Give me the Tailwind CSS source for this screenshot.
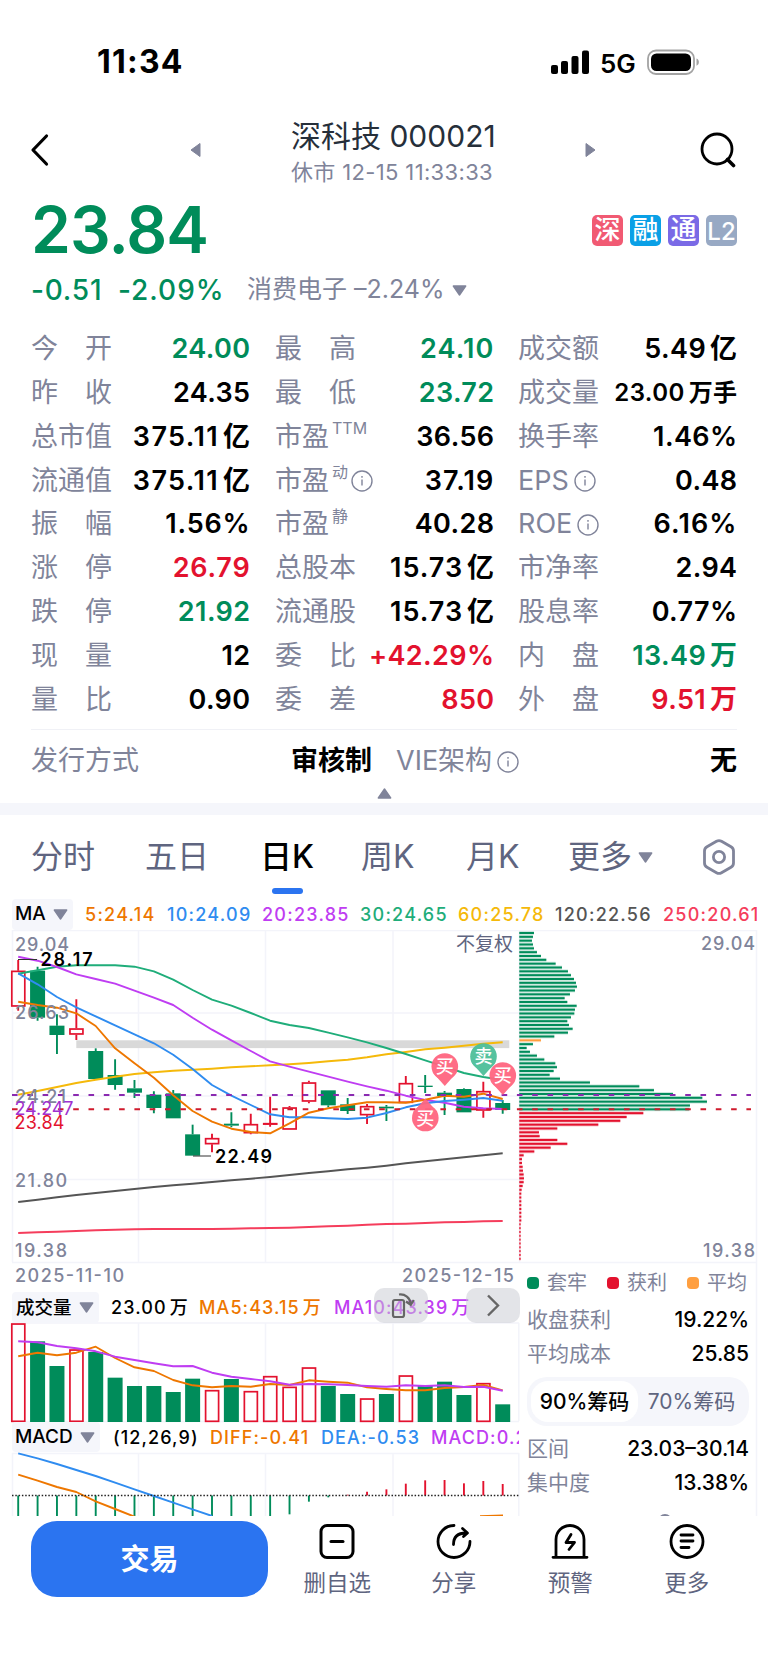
<!DOCTYPE html>
<html lang="zh-CN">
<head>
    <meta charset="UTF-8">
    <meta name="viewport" content="width=device-width, initial-scale=1.0">
    <title>深科技 000021</title>
    <script src="https://cdn.jsdelivr.net/npm/@tailwindcss/browser@4"></script>
</head>
<body class="bg-white font-['Inter','Noto_Sans_CJK_SC',sans-serif] text-black">

<!-- Shared icons -->
<svg class="hidden">
    <symbol id="info" viewBox="0 0 22 22">
        <circle cx="11" cy="11" r="10" fill="none" stroke="currentColor" stroke-width="1.4"/>
        <path d="M11 9.4V15.6M11 6v1.8" stroke="currentColor" stroke-width="1.4"/>
    </symbol>
    <symbol id="down" viewBox="0 0 15 11">
        <path d="M1.3 1h12.4L7.5 10z" fill="currentColor" stroke="currentColor" stroke-width="1.4" stroke-linejoin="round"/>
    </symbol>
</svg>

<div class="w-[768px] h-[1670px] overflow-hidden flex flex-col whitespace-nowrap">

    <!-- Status bar -->
    <div class="h-[118px] shrink-0 flex items-start justify-between pl-[97px] pr-[68px] pt-[42px]">
        <span class="text-[32px] leading-[40px] font-bold tracking-[1.2px]">11:34</span>
        <div class="flex items-center h-[40px]">
            <svg class="w-[38px] h-[26px]" viewBox="0 0 38 26">
                <rect x="0" y="16" width="7" height="9" rx="2"/>
                <rect x="10" y="12" width="7" height="13" rx="2"/>
                <rect x="20.5" y="7" width="7" height="18" rx="2"/>
                <rect x="31" y="1.500" width="7" height="23.500" rx="2"/>
            </svg>
            <span class="text-[26px] font-semibold ml-[11px] w-[47px] mt-[2px]">5G</span>
            <svg class="w-[53px] h-[26px]" viewBox="0 0 53 26">
                <rect x="1" y="1.500" width="46" height="23.500" rx="8" fill="none" stroke="#a3a3a3" stroke-width="1.800"/>
                <rect x="4" y="4.500" width="40" height="17.500" rx="5.500"/>
                <path d="M49.500 9.500c3.200 1.200 3.200 6 0 7.200z" fill="#a3a3a3"/>
            </svg>
        </div>
    </div>

    <!-- Header -->
    <header class="h-[72px] shrink-0 flex items-start pl-[30px]">
        <svg class="w-[20px] h-[34px] mt-[15px]" viewBox="0 0 20 34"><path d="M16.500 3L3 17l13.500 14" fill="none" stroke="#000" stroke-width="3.200" stroke-linecap="round" stroke-linejoin="round"/></svg>
        <svg class="w-[11px] h-[16px] mt-[24px] ml-[140px]" viewBox="0 0 11 16"><path d="M10 1.500v13L1 8z" fill="#80849a" stroke="#80849a" stroke-linejoin="round"/></svg>
        <div class="ml-[90px] w-[210px]">
            <h1 class="text-[30px] leading-[37px] text-[#262f3a]">深科技 000021</h1>
            <p class="text-[22px] leading-[34px] tracking-[0.35px] text-[#80849a]">休市 12-15 11:33:33</p>
        </div>
        <svg class="w-[11px] h-[16px] mt-[24px] ml-[84px]" viewBox="0 0 11 16"><path d="M1 1.500v13L10 8z" fill="#80849a" stroke="#80849a" stroke-linejoin="round"/></svg>
        <svg class="w-[36px] h-[36px] mt-[14px] ml-[104px]" viewBox="0 0 36 36"><circle cx="17" cy="17" r="15" fill="none" stroke="#000" stroke-width="2.800"/><path d="M27.500 27.500l6 6" stroke="#000" stroke-width="3.600" stroke-linecap="round"/></svg>
    </header>

    <!-- Price -->
    <section class="h-[132px] shrink-0 px-[31px]">
        <div class="flex justify-between">
            <div class="text-[64px] leading-[80px] font-semibold text-[#008c5a] tracking-[-0.9px]">23.84</div>
            <div class="flex gap-[7px] pt-[25px] text-white text-[26px] leading-[29px] font-medium text-center [&>span]:w-[31px] [&>span]:h-[31px] [&>span]:rounded-[5px]">
                <span class="bg-[#f15a73]">深</span>
                <span class="bg-[#0aa0e6]">融</span>
                <span class="bg-[#7a6ae6]">通</span>
                <span class="bg-[#98a9c4] text-[24px] leading-[33px]">L2</span>
            </div>
        </div>
        <div class="flex items-center h-[40px] text-[28px] font-medium text-[#008c5a]">
            <span class="w-[87px] tracking-[0.8px]">-0.51</span>
            <span class="w-[129px] tracking-[1px]">-2.09%</span>
            <span class="text-[25px] font-normal text-[#80849a]">消费电子 –2.24%</span>
            <svg class="w-[15px] h-[11px] ml-[7px] text-[#80849a]"><use href="#down"/></svg>
        </div>
    </section>

    <!-- Quote details -->
    <section class="h-[407px] shrink-0 pl-[31px] pt-[5px]">
        <div class="grid grid-cols-[219.5px_24.5px_219.5px_23.5px_219.5px] auto-rows-[43.95px] [&>div]:flex [&>div]:items-center [&>div]:justify-between text-[27px] font-semibold tracking-[0.4px] [&_label]:tracking-normal [&_label]:font-normal [&_label]:text-[#80849a] [&_label]:flex [&_label]:items-center [&_sup]:text-[16px] [&_sup]:-top-[9px] [&_sup]:ml-[3px] [&_svg]:w-[22px] [&_svg]:h-[22px]">
            <div><label>今　开</label><b class="text-[#008c5a] font-semibold">24.00</b></div><i></i>
            <div><label>最　高</label><b class="text-[#008c5a] font-semibold tracking-[1.1px]">24.10</b></div><i></i>
            <div><label>成交额</label><span>5.49<span class="ml-[4px]">亿</span></span></div>

            <div><label>昨　收</label><span>24.35</span></div><i></i>
            <div><label>最　低</label><b class="text-[#008c5a] font-semibold">23.72</b></div><i></i>
            <div><label>成交量</label><span class="text-[24px]">23.00<span class="ml-[4px]">万手</span></span></div>

            <div><label>总市值</label><span><span class="tracking-[1.400px]">375.11</span><span class="ml-[4px]">亿</span></span></div><i></i>
            <div><label>市盈<sup>TTM</sup></label><span>36.56</span></div><i></i>
            <div><label>换手率</label><span>1.46%</span></div>

            <div><label>流通值</label><span><span class="tracking-[1.400px]">375.11</span><span class="ml-[4px]">亿</span></span></div><i></i>
            <div><label>市盈<sup>动</sup><svg class="ml-[3px]"><use href="#info"/></svg></label><span class="tracking-[1.1px]">37.19</span></div><i></i>
            <div><label>EPS<svg class="ml-[5px]"><use href="#info"/></svg></label><span>0.48</span></div>

            <div><label>振　幅</label><span class="tracking-[0.8px]">1.56%</span></div><i></i>
            <div><label>市盈<sup>静</sup></label><span>40.28</span></div><i></i>
            <div><label>ROE<svg class="ml-[5px]"><use href="#info"/></svg></label><span class="tracking-[1.1px]">6.16%</span></div>

            <div><label>涨　停</label><b class="text-[#e3122e] font-semibold tracking-[0.8px]">26.79</b></div><i></i>
            <div><label>总股本</label><span><span class="tracking-[1px]">15.73</span><span class="ml-[4px]">亿</span></span></div><i></i>
            <div><label>市净率</label><span>2.94</span></div>

            <div><label>跌　停</label><b class="text-[#008c5a] font-semibold">21.92</b></div><i></i>
            <div><label>流通股</label><span><span class="tracking-[1px]">15.73</span><span class="ml-[4px]">亿</span></span></div><i></i>
            <div><label>股息率</label><span>0.77%</span></div>

            <div><label>现　量</label><span>12</span></div><i></i>
            <div><label>委　比</label><b class="text-[#e3122e] font-semibold">+42.29%</b></div><i></i>
            <div><label>内　盘</label><b class="text-[#008c5a] font-semibold">13.49<span class="ml-[4px]">万</span></b></div>

            <div><label>量　比</label><span>0.90</span></div><i></i>
            <div><label>委　差</label><b class="text-[#e3122e] font-semibold">850</b></div><i></i>
            <div><label>外　盘</label><b class="text-[#e3122e] font-semibold">9.51<span class="ml-[4px]">万</span></b></div>
        </div>
    </section>

    <section class="h-[74px] shrink-0 mx-[31px] border-t border-[#f0f1f6]">
        <div class="flex items-center h-[63px] text-[27px] text-[#80849a]">
            <span class="w-[260px]">发行方式</span>
            <b class="text-black font-bold">审核制</b>
            <span class="ml-[24px]">VIE架构</span>
            <svg class="w-[22px] h-[22px] ml-[5px]"><use href="#info"/></svg>
            <b class="ml-auto text-black font-bold">无</b>
        </div>
        <svg class="w-[15px] h-[11px] mx-auto -mt-[5px] text-[#80849a] rotate-180"><use href="#down"/></svg>
    </section>
    <div class="h-[12px] shrink-0 bg-[#f5f6fb]"></div>

    <!-- Period tabs -->
    <nav class="h-[84px] shrink-0 flex items-center pl-[31px] text-[32px] text-[#5f6580]">
        <span class="w-[114px]">分时</span>
        <span class="w-[115px]">五日</span>
        <span class="w-[101px] relative text-black font-medium">日K<i class="absolute left-[12px] top-[55px] w-[31px] h-[6px] rounded-[3px] bg-[#2b74f0]"></i></span>
        <span class="w-[105px]">周K</span>
        <span class="w-[102px]">月K</span>
        <span class="w-[70px]">更多</span>
        <svg class="w-[15px] h-[11px] text-[#80849a]"><use href="#down"/></svg>
        <svg class="w-[36px] h-[38px] ml-[48px]" viewBox="0 0 36 38" fill="none" stroke="#80849a" stroke-width="2.800">
            <path d="M15.500 3.300q2.500-1.400 5 0l9.500 5.500q2.500 1.500 2.500 4.300v11.800q0 2.800-2.500 4.300l-9.500 5.500q-2.500 1.400-5 0L6 29.200q-2.500-1.500-2.500-4.300V13.100q0-2.800 2.500-4.300z"/>
            <circle cx="18" cy="19" r="5.600"/>
        </svg>
    </nav>

    <!-- MA legend -->
    <div class="h-[31px] shrink-0 flex items-center ml-[12px] w-[745px] overflow-hidden text-[18px] font-medium tracking-[1.25px]">
        <span class="w-[61px] h-[31px] shrink-0 mr-[12px] pl-[3px] bg-[#f5f6fb] rounded-[4px] flex items-center tracking-normal text-[19px]">MA<svg class="w-[15px] h-[11px] ml-[7px] text-[#80849a]"><use href="#down"/></svg></span>
        <span class="w-[82px] shrink-0 text-[#ee7700]">5:24.14</span>
        <span class="w-[95px] shrink-0 text-[#2f8cf0]">10:24.09</span>
        <span class="w-[98px] shrink-0 text-[#bf3df2]">20:23.85</span>
        <span class="w-[98px] shrink-0 text-[#1fad7a]">30:24.65</span>
        <span class="w-[97px] shrink-0 text-[#f5b90a]">60:25.78</span>
        <span class="w-[108px] shrink-0 text-[#555555]">120:22.56</span>
        <span class="shrink-0 text-[#f53d5c]">250:20.61</span>
    </div>

    <!-- Charts: canvas coordinates start at y = 930 -->
    <main class="relative h-[586px] shrink-0 overflow-hidden">
        <svg class="block w-[768px] h-[586px]" viewBox="0 930 768 586">
            <g stroke="#f3f4fa" stroke-width="1.500" fill="none">
                <path d="M12 930.500H757M12 1013H519M12 1096H519M12 1179.500H519M12 1262.500H757"/>
                <path d="M12.500 930V1262M138.500 930V1262M265.500 930V1262M393 930V1262M519.500 930V1262M756.500 930V1516"/>
                <path d="M12 1323H519M12 1421.500H519M12 1453.500H519"/>
                <path d="M12.500 1323V1421M138.500 1323V1421M265.500 1323V1421M393 1323V1421M518.800 1323V1421M12.500 1453V1516M138.500 1453V1516M265.500 1453V1516M393 1453V1516M518.800 1453V1516"/>
            </g>
            <rect x="76.300" y="1040.300" width="433" height="7.800" fill="#d9d9d9"/>
            <g id="price"></g>
            <g id="chips"></g>
            <path d="M12 1095H751" stroke="#8a2ab0" stroke-width="1.900" stroke-dasharray="5.600 9.700"/>
            <path d="M12 1109.300H751" stroke="#cf1a2c" stroke-width="1.900" stroke-dasharray="5.600 9.700"/>
            <g font-size="18" font-weight="500" fill="#80849a">
                <text x="15" y="951" textLength="54">29.04</text>
                <text x="15" y="1019.300" textLength="54">26.63</text>
                <text x="15" y="1102.500" textLength="51">24.21</text>
                <text x="14.500" y="1115" textLength="59" font-weight="400" fill="#a030d0">24.247</text>
                <text x="14.500" y="1129" textLength="50" font-weight="400" fill="#e3122e">23.84</text>
                <text x="15" y="1186.500" textLength="52">21.80</text>
                <text x="15" y="1257" textLength="52">19.38</text>
                <text x="15" y="1281.700" textLength="109">2025-11-10</text>
                <text x="402" y="1281.700" textLength="112">2025-12-15</text>
                <text x="701" y="949.700" textLength="54">29.04</text>
                <text x="703" y="1257" textLength="52">19.38</text>
                <text x="456" y="951" font-size="19" font-weight="400" fill="#5f6580" textLength="57">不复权</text>
                <text x="40.500" y="966" font-weight="600" fill="#000" textLength="52">28.17</text>
                <text x="215" y="1163" font-weight="600" fill="#000" textLength="57">22.49</text>
            </g>
            <path d="M18 959.500H37M193 1156H211" stroke="#333"/>
            <g id="pins"></g>
            <g id="volume"></g>
            <g id="macd"></g>
        </svg>

        <!-- Volume header -->
        <div class="absolute left-[12px] top-[362px] w-[507px] h-[31px] flex items-center text-[18px] font-medium tracking-[1.1px]">
            <span class="w-[87px] h-[31px] mr-[12px] pl-[4px] bg-[#f5f6fb] rounded-[4px] flex items-center text-[18.5px] tracking-normal">成交量<svg class="w-[15px] h-[11px] ml-[7px] text-[#80849a]"><use href="#down"/></svg></span>
            <span class="w-[88px]">23.00<span class="ml-[3px]">万</span></span>
            <span class="w-[135px] text-[#ee7700]">MA5:43.15<span class="ml-[3px]">万</span></span>
            <span class="text-[#bf3df2]">MA10:43.39<span class="ml-[3px]">万</span></span>
        </div>
        <div class="absolute left-[374px] top-[358px] w-[54px] h-[35px] rounded-[10px] bg-[#c8cad2]/50">
            <svg class="w-[54px] h-[35px]" viewBox="0 0 54 35" fill="none" stroke="#666" stroke-width="2.200"><rect x="19" y="12" width="11" height="17" rx="2"/><path d="M25 6.500c6-.8 11 3 12 9.500M32 13.500l4.800 3.500 3-5"/></svg>
        </div>
        <div class="absolute left-[466px] top-[358px] w-[54px] h-[35px] rounded-[10px] bg-[#c8cad2]/50">
            <svg class="w-[54px] h-[35px]" viewBox="0 0 54 35" fill="none" stroke="#666" stroke-width="2.400"><path d="M22 7.500l10 10-10 10"/></svg>
        </div>

        <!-- MACD header -->
        <div class="absolute left-[12px] top-[492px] w-[507px] h-[30px] overflow-hidden flex items-center text-[18px] font-medium tracking-[1.1px]">
            <span class="w-[88px] h-[30px] shrink-0 mr-[13px] pl-[3px] bg-[#f5f6fb] rounded-[4px] flex items-center tracking-normal text-[19px]">MACD<svg class="w-[15px] h-[11px] ml-[7px] text-[#80849a]"><use href="#down"/></svg></span>
            <span class="w-[97px] shrink-0">(12,26,9)</span>
            <span class="w-[111px] shrink-0 text-[#ee7700]">DIFF:-0.41</span>
            <span class="w-[110px] shrink-0 text-[#2f8cf0]">DEA:-0.53</span>
            <span class="shrink-0 text-[#bf3df2]">MACD:0.24</span>
        </div>

        <!-- Chip distribution summary -->
        <div class="absolute left-[527px] top-[334px] w-[222px] h-[252px] overflow-hidden text-[21px] text-[#80849a] [&_b]:font-medium [&_b]:text-black">
            <div class="flex items-center h-[38px] text-[20px] [&>i]:w-[12px] [&>i]:h-[12px] [&>i]:rounded-[4px] [&>i]:mr-[8px]">
                <i class="bg-[#008c5a]"></i><span class="w-[60px]">套牢</span>
                <i class="bg-[#e3122e]"></i><span class="w-[60px]">获利</span>
                <i class="bg-[#ff9f40]"></i><span>平均</span>
            </div>
            <div class="flex justify-between items-center h-[34px] mt-px"><span>收盘获利</span><b>19.22%</b></div>
            <div class="flex justify-between items-center h-[34px]"><span>平均成本</span><b>25.85</b></div>
            <div class="flex items-center h-[49px] mt-[6px] p-[4px] rounded-[20px] bg-[#f5f6fb] text-[#5f6580] text-center">
                <b class="w-[107px] h-[41px] leading-[41px] rounded-[17px] bg-white">90%筹码</b>
                <span class="flex-1">70%筹码</span>
            </div>
            <div class="flex justify-between items-center h-[34px] mt-[6px]"><span>区间</span><b>23.03–30.14</b></div>
            <div class="flex justify-between items-center h-[34px]"><span>集中度</span><b>13.38%</b></div>
            <i class="block w-[14px] h-[14px] ml-[131px] mt-[14px] rounded-full border-2 border-[#80849a]"></i>
        </div>
    </main>

    <!-- Bottom bar -->
    <footer class="flex pt-[5px] pl-[31px] text-[22.5px] text-[#5f6580]">
        <button class="w-[237px] h-[76px] pt-[2px] rounded-[26px] bg-[#2b74f0] text-white text-[29px] font-bold">交易</button>
        <div class="flex ml-[11px] [&>div]:w-[116.500px] [&>div]:flex [&>div]:flex-col [&>div]:items-center [&_svg]:w-[40px] [&_svg]:h-[40px] [&_span]:leading-[34px] [&_span]:mt-[5px]">
            <div>
                <svg viewBox="0 0 40 40" fill="none" stroke="#000" stroke-width="3" stroke-linecap="round"><rect x="4" y="4.500" width="32" height="32" rx="6"/><path d="M14 20.500h12"/></svg>
                <span>删自选</span>
            </div>
            <div>
                <svg viewBox="0 0 40 40" fill="none" stroke="#000" stroke-width="2.800" stroke-linecap="round" stroke-linejoin="round"><path d="M20 4.500a16 16 0 1 0 16 16M19.500 23.500c0-7.500 4.500-11.500 12.500-11.500M28.500 7.500l5 4.500-4 3.500"/></svg>
                <span>分享</span>
            </div>
            <div>
                <svg viewBox="0 0 40 40" fill="none" stroke="#000" stroke-width="2.800" stroke-linecap="round" stroke-linejoin="round"><path d="M6 36V18.500a14 14 0 0 1 28 0V36M3 36.300h34M21 13.500l-5 8h8.500l-5.500 7"/></svg>
                <span>预警</span>
            </div>
            <div>
                <svg viewBox="0 0 40 40" fill="none" stroke="#000" stroke-width="2.800" stroke-linecap="round"><circle cx="20" cy="20.500" r="16"/><path d="M14 14h12M14 20h12M14 26.500h8"/></svg>
                <span>更多</span>
            </div>
        </div>
    </footer>
</div>

<script>
    const RED = '#e3122e', GREEN = '#008c5a';
    const cx = i => 18.2 + 19.38 * i;

    // [up?, open/close top, bottom, high, low] in thirds of a pixel from y = 920
    const candles = [
        [1,152,260,120,272],[0,152,293,140,302],[0,317,345,283,402],[1,325,344,238,360],[0,393,477,385,477],
        [0,465,495,418,509],[0,505,518,480,534],[0,524,564,514,580],[0,520,595,510,595],[0,643,707,614,707],
        [1,654,673,641,697],[0,611,617,577,622],[1,612,640,581,643],[1,609,614,530,620],[1,562,629,558,629],
        [1,487,545,482,550],[0,511,556,511,562],[0,553,573,534,582],[1,558,586,552,612],[0,560,565,555,603],
        [1,489,549,468,549],[0,497,501,465,519],[0,518,528,513,585],[0,507,577,505,577],[1,513,572,485,593],[0,549,570,540,581]
    ];
    const averages = {
        '#555555': [846,839,832,825,819,813,807,801,796,791,786,781,776,771,765,759,754,748,743,737,730,724,718,712,706,700],
        '#f53d5c': [939,937,935,933,931,929,928,927,927,927,927,926,925,924,923,921,919,917,914,912,911,909,907,906,904,903],
        '#f5b90a': [524,513,501,489,479,470,462,457,452,449,446,442,439,436,433,429,424,419,412,403,396,388,383,377,371,367],
        '#1fad7a': [161,151,140,136,136,136,140,154,179,210,239,257,279,302,315,324,338,352,367,384,402,421,440,459,471,480],
        '#bf3df2': [110,122,141,163,177,191,212,233,255,293,329,361,393,424,440,455,470,485,499,512,527,540,548,560,565,567],
        '#2f8cf0': [160,193,231,262,289,316,343,370,404,447,495,527,555,583,592,592,595,597,593,579,562,550,543,539,534,542],
        '#ee7700': [245,255,263,280,318,385,430,473,526,573,605,626,636,640,610,578,565,556,547,547,548,539,527,530,521,537]
    };

    function line(values, base, color) {
        const pts = values.map((v, i) => cx(i).toFixed(1) + ',' + (base + v / 3).toFixed(1)).join(' ');
        return `<polyline points="${pts}" fill="none" stroke="${color}" stroke-width="1.9" stroke-linejoin="round"/>`;
    }

    function box(i, up, top, bottom) {
        const x = cx(i);
        return up
            ? `<rect x="${x - 6.4}" y="${top + .7}" width="13" height="${Math.max(bottom - top - 1.4, .4)}" fill="none" stroke="${RED}" stroke-width="1.7"/>`
            : `<rect x="${x - 7.5}" y="${top}" width="15" height="${bottom - top}" fill="${GREEN}"/>`;
    }

    let html = '';
    candles.forEach(([up, t, b, h, l], i) => {
        const y = v => 920 + v / 3, color = up ? RED : GREEN;
        html += `<path d="M${cx(i)} ${y(h)}V${y(t)}M${cx(i)} ${y(b)}V${y(l)}" stroke="${color}" stroke-width="1.9"/>`;
        html += box(i, up, y(t), y(b));
    });
    for (const color in averages) html += line(averages[color], 920, color);
    document.getElementById('price').innerHTML = html;

    // Chip distribution, right edge of each bar
    const chips = [102,99,96,99,102,111,123,139,167,186,204,213,222,228,231,225,210,194,202,230,225,223,213,202,207,218,204,163,
        123,99,80,90,111,133,166,171,161,149,180,270,418,462,519,607,621,570,568,
        430,380,361,295,172,117,119,172,202,152,103,71,66,66,68,69,71,72,71,68,65];
    while (chips.length < 86) chips.push(chips.length < 76 ? 64 : 62);
    html = '';
    chips.forEach((v, i) => {
        const y = 932 + i * 3.833, w = (v - 58) / 3;
        const color = i === 28 ? '#ff9f40' : i < 47 ? '#008c5a' : '#e3122e';
        html += `<rect x="519.3" y="${y - .9}" width="${w}" height="3.8" fill="${color}" opacity=".2"/><rect x="519.3" y="${y}" width="${w}" height="2" fill="${color}"/>`;
    });
    document.getElementById('chips').innerHTML = html;

    // Trade markers: [x, y of the circle, label, tail direction]
    html = '';
    [[444.8,1066.5,'买',1],[483.5,1056.5,'卖',1],[502.8,1075.5,'买',1],[425.3,1118,'买',-1]].forEach(([x, y, s, d]) => {
        const color = s === '买' ? '#ff6680' : '#4dbf99';
        html += `<g fill="${color}" opacity=".95"><circle cx="${x}" cy="${y}" r="13.3"/><path d="M${x - 12} ${y + 6 * d}L${x} ${y + 19.5 * d}L${x + 12} ${y + 6 * d}z"/></g>`;
        html += `<text x="${x}" y="${y + 6.5}" font-size="18" font-weight="500" fill="#fff" text-anchor="middle">${s}</text>`;
    });
    document.getElementById('pins').innerHTML = html;

    // Volume
    const volume = [160,214,288,238,246,323,348,348,366,326,360,327,363,318,350,292,348,372,385,372,316,348,335,375,339,403];
    const volUp = [0,3,10,12,13,14,15,18,20,24];
    document.getElementById('volume').innerHTML =
        volume.map((v, i) => box(i, volUp.includes(i), 1270 + v / 3, 1422)).join('') +
        line([259,248,256,248,230,264,292,303,330,346,352,348,350,342,345,331,335,338,352,357,361,361,354,351,345,361], 1270, '#ee7700') +
        line([214,217,228,235,244,260,270,280,289,288,308,320,327,334,344,342,343,345,348,350,346,348,346,351,350,362], 1270, '#bf3df2');

    // MACD
    const macd = [745,745,745,745,745,745,745,745,745,745,745,745,745,745,733,695,682,674,665,658,641,631,630,640,633,642];
    document.getElementById('macd').innerHTML =
        macd.map((v, i) => `<path d="M${cx(i)} 1495.5V${1270 + v / 3}" stroke="${v > 676 ? GREEN : RED}" stroke-width="1.9"/>`).join('') +
        line([550,565,582,600,618,638,658,678,698,718,738], 1270, '#2f8cf0') +
        line([614,632,651,666,694,717,740], 1270, '#ee7700') +
        '<path d="M480 1516L503 1515.300" stroke="#ee7700" stroke-width="1.500"/>' +
        '<path d="M12 1495.500H519" stroke="#222" stroke-width="1.500" stroke-dasharray="1.500 1.800"/>';
</script>

</body>
</html>
